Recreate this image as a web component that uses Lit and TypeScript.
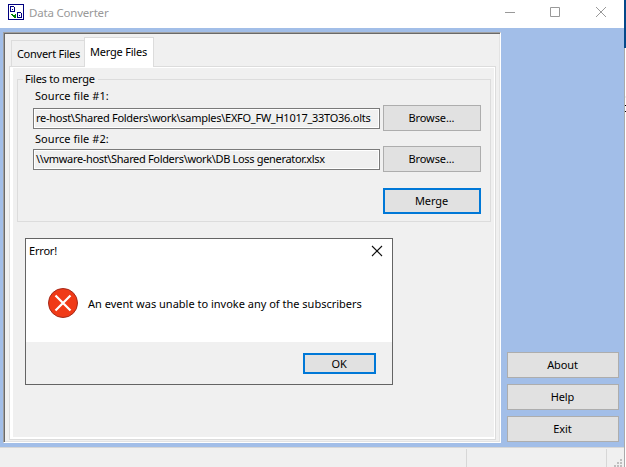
import { LitElement, html, css, svg } from "lit";
import { customElement, property } from "lit/decorators.js";

@customElement("push-button")
class PushButton extends LitElement {
  @property() label = "";
  @property({ type: Boolean, reflect: true }) primary = false;
  static styles = css`
    :host { display: block; height: 26px; letter-spacing: -0.1px; }
    button {
      box-sizing: border-box; display: flex; align-items: center; justify-content: center;
      width: 100%; height: 100%; padding: 0 1px 1px 0; border: 1px solid #adadad; background: #e1e1e1;
      color: #000; font: inherit; letter-spacing: inherit; white-space: nowrap;
    }
    :host([primary]) button { border: 2px solid #0078d7; }
  `;
  render() {
    return html`<button><span>${this.label}</span></button>`;
  }
}

@customElement("file-row")
class FileRow extends LitElement {
  @property() label = "";
  static styles = css`
    :host { display: block; height: 41px; }
    .label {
      display: block; box-sizing: border-box; height: 20px; line-height: 15px;
      padding: var(--label-drop, 0) 0 0 2px; letter-spacing: 0.05px;
    }
    .line { display: flex; gap: 3px; align-items: flex-start; }
    .field {
      box-sizing: border-box; width: 347px; height: 21px; border: 1px solid #7a7a7a;
      box-shadow: inset 0 0 0 1px #fff; padding-left: 2px; line-height: 18px;
      white-space: nowrap; overflow: hidden; letter-spacing: var(--path-spacing, -0.27px);
    }
    push-button { width: 98px; margin-top: -3px; }
  `;
  render() {
    return html`
      <span class="label">${this.label}</span>
      <div class="line">
        <div class="field"><slot></slot></div>
        <push-button label="Browse..."></push-button>
      </div>`;
  }
}

@customElement("error-dialog")
class ErrorDialog extends LitElement {
  static styles = css`
    :host {
      box-sizing: border-box; display: flex; flex-direction: column; width: 368px; height: 147px;
      border: 1px solid #646464; background: #fff;
    }
    .head { display: flex; justify-content: space-between; height: 40px; padding: 0 9px 0 3px; }
    .title { line-height: 24px; letter-spacing: -0.2px; }
    .head svg { margin-top: 6px; }
    .body { display: flex; align-items: center; height: 63px; padding-left: 21px; box-sizing: border-box; padding-bottom: 14px; gap: 9px; }
    .msg { letter-spacing: 0; white-space: nowrap; }
    .foot { flex: 1; display: flex; justify-content: flex-end; background: #f0f0f0; padding: 11px 16px 0 0; }
    push-button { width: 73px; height: 21px; }
  `;
  render() {
    return html`
      <div class="head">
        <span class="title">Error!</span>
        <svg width="12" height="12"><path d="M1 1L11 11M11 1L1 11" stroke="#111" stroke-width="1.1" /></svg>
      </div>
      <div class="body">
        <svg width="32" height="32">
          <circle cx="16" cy="15" r="14.5" fill="#f03a17" stroke="#a52a1a" />
          <path d="M8.5 7.5L23.5 22.5M23.5 7.5L8.5 22.5" stroke="#fff" stroke-width="2.2" />
        </svg>
        <span class="msg">An event was unable to invoke any of the subscribers</span>
      </div>
      <div class="foot"><push-button primary label="OK"></push-button></div>`;
  }
}

@customElement("app-root")
class AppRoot extends LitElement {
  static styles = css`
    :host {
      display: flex; width: 626px; height: 467px; overflow: hidden; background: #fff; color: #000;
      font: 11px "Noto Sans", "Open Sans", sans-serif; letter-spacing: -0.25px;
    }
    .window { width: 624px; display: flex; flex-direction: column; }
    .edge { width: 2px; }
    .edge svg { display: block; }
    .titlebar { display: flex; height: 28px; color: #999; }
    .logo { margin: 4px 0 0 8px; }
    .caption { margin-left: 5px; line-height: 26px; font-size: 11.5px; letter-spacing: -0.2px; flex: 1; }
    .client { display: flex; height: 419px; background: #a2bee8; }
    .panel {
      box-sizing: border-box; width: 498px; height: 411px; margin: 4px 0 0 3px; background: #f0f0f0;
      border: 1px solid; border-color: #a0a0a0 #fff #fff #a0a0a0; padding: 7px 5px 3px 5px;
      box-shadow: inset 1px 1px #696969, inset -1px -1px #e3e3e3;
    }
    .tabs { display: flex; align-items: flex-end; height: 27px; padding-left: 2px; margin-bottom: -1px; position: relative; white-space: nowrap; }
    .tab { box-sizing: border-box; border: 1px solid #dcdcdc; text-align: center; }
    .tab.back { width: 74px; height: 26px; line-height: 26px; border-right: 0; border-bottom: 0; margin-bottom: 1px; }
    .tab.front { width: 70px; height: 30px; line-height: 27px; background: #fff; border-bottom: 0; margin-left: -1px; padding-right: 1px; letter-spacing: -0.2px; }
    .page {
      box-sizing: border-box; width: 487px; height: 374px; border: 1px solid #dcdcdc;
      box-shadow: inset 3px 1px #fff, inset -1px -2px #fff; padding: 12px 0 0 7px;
    }
    .group { box-sizing: border-box; position: relative; width: 474px; height: 143px; border: 1px solid #dcdcdc; padding: 8px 0 0 15px; }
    .legend { position: absolute; left: 5px; top: -9px; line-height: 15px; padding: 0 3px 0 2px; background: #f0f0f0; }
    .second { --label-drop: 2px; --path-spacing: -0.33px; }
    .merge { width: 98px; margin: 18px 0 0 350px; }
    error-dialog { margin: 16px 0 0 8px; }
    .side { display: flex; flex-direction: column; justify-content: flex-end; gap: 6px; width: 112px; padding: 0 0 5px 6px; }
    .status { flex: 1; display: flex; background: #f0f0f0; border-top: 1px solid #d7d7d7; }
    .cell { border-right: 1px solid #d7d7d7; margin-top: 1px; box-sizing: border-box; }
    .wide { width: 467px; }
    .narrow { width: 140px; }
    .grip { margin: 11px 0 0 7px; }
  `;
  render() {
    return html`
      <div class="window">
        <div class="titlebar">
          <svg class="logo" width="16" height="16" shape-rendering="crispEdges" fill="none" stroke="#000080">
            <path d="M.5 .5H15.5V15.5H.5ZM2.5 2.5H5.5L6.5 3.5V7.5H2.5ZM9.5 8.5H12.5L13.5 9.5V13.5H9.5ZM4 5.5H5M11 11.5H12" />
            <path d="M3 10.5H5M4 11.5H8M5 12.5H8M6 13.5H8M7.5 10V13" stroke="#008000" />
          </svg>
          <span class="caption">Data Converter</span>
          <svg width="120" height="28" fill="none" stroke="#999">
            <path d="M1 12.5H11M46.5 7.5H55.5V16.5H46.5ZM92 7L102 17M102 7L92 17" />
          </svg>
        </div>
        <div class="client">
          <div class="panel">
            <div class="tabs">
              <div class="tab back">Convert Files</div>
              <div class="tab front">Merge Files</div>
            </div>
            <div class="page">
              <div class="group">
                <span class="legend">Files to merge</span>
                <file-row label="Source file #1:">re-host\\Shared Folders\\work\\samples\\EXFO_FW_H1017_33TO36.olts</file-row>
                <file-row class="second" label="Source file #2:">\\\\vmware-host\\Shared Folders\\work\\DB Loss generator.xlsx</file-row>
                <push-button class="merge" primary label="Merge"></push-button>
              </div>
              <error-dialog></error-dialog>
            </div>
          </div>
          <div class="side">
            <push-button label="About"></push-button>
            <push-button label="Help"></push-button>
            <push-button label="Exit"></push-button>
          </div>
        </div>
        <div class="status">
          <div class="cell wide"></div>
          <div class="cell narrow"></div>
          <svg class="grip" width="10" height="8" fill="#bfbfbf">
            ${[[6, 0], [3, 3], [6, 3], [0, 6], [3, 6], [6, 6]].map(([x, y]) => svg`<rect x=${x} y=${y} width="2" height="2" />`)}
          </svg>
        </div>
      </div>
      <div class="edge">
        <svg width="2" height="467">
          <rect width="2" height="48" fill="#04498a" />
          <rect y="48" width="1" height="419" fill="#aaa" />
          <path d="M1 105.5H2M1 111.5H2" stroke="#000" />
          <path d="M1 97H2" stroke="#ddd" />
        </svg>
      </div>`;
  }
}
